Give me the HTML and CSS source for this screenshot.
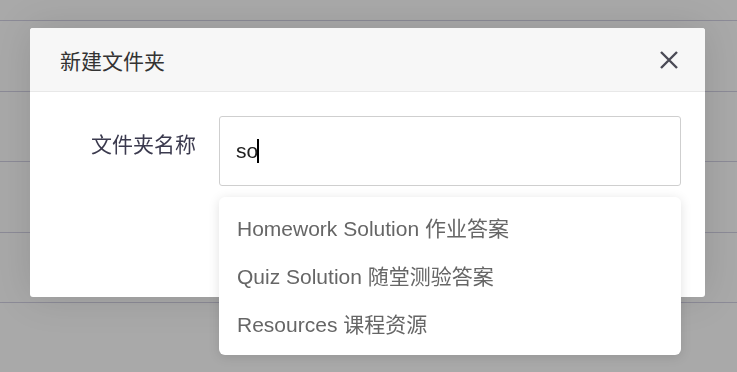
FILE: index.html
```html
<!DOCTYPE html>
<html lang="zh">
<head>
    <meta charset="UTF-8">
    <meta name="viewport" content="width=device-width, initial-scale=1.0">
    <title>新建文件夹</title>
    <link rel="stylesheet" href="styles.css">
</head>
<body>
    <!-- 背景里的表格行 -->
    <div class="page">
        <div class="row row-first"></div>
        <div class="row"></div>
        <div class="row"></div>
        <div class="row"></div>
        <div class="row"></div>
    </div>

    <div class="mask">
        <div class="modal">
            <div class="modal-header">
                <span class="modal-title">新建文件夹</span>
                <span class="btn-close">
                    <svg width="20" height="20" viewBox="0 0 20 20">
                        <path d="M2 2 L18 18 M18 2 L2 18" stroke="#4a4a55" stroke-width="2.4" fill="none"/>
                    </svg>
                </span>
            </div>
            <div class="modal-body">
                <label class="form-label">文件夹名称</label>
                <div class="form-field">
                    <div class="input">so<span class="caret"></span></div>
                    <ul class="suggest">
                        <li>Homework Solution 作业答案</li>
                        <li>Quiz Solution 随堂测验答案</li>
                        <li>Resources 课程资源</li>
                    </ul>
                </div>
            </div>
        </div>
    </div>
</body>
</html>
```

FILE: styles.css
```css
body {
    margin: 0;
    font-family: 'Liberation Sans', 'Noto Sans CJK SC', sans-serif;
    background-color: #a9a9a9;
    overflow: hidden;
}
.page {
    height: 372px;
}
.row {
    height: 69.5px;
    border-bottom: 1px solid #8c8b97;
}
.row-first {
    height: 20px;
}
.mask {
    position: fixed;
    top: 0;
    left: 0;
    right: 0;
    bottom: 0;
    padding-top: 28px;
}
.modal {
    margin-left: 30px;
    width: 675px;
    background-color: white;
    border-radius: 3px;
    box-shadow: 0 0 40px rgba(0,0,0,0.12);
}
.modal-header {
    height: 63px;
    display: flex;
    align-items: center;
    justify-content: space-between;
    padding: 0 26px 0 30px;
    background-color: #f7f7f7;
    border-bottom: 1px solid #e8e8e8;
    border-radius: 3px 3px 0 0;
}
.modal-title {
    font-size: 21px;
    color: #333;
}
.btn-close {
    display: flex;
    cursor: pointer;
}
.modal-body {
    display: flex;
    padding: 24px 24px 111px 24px;
}
.form-label {
    width: 142px;
    margin-right: 23px;
    padding-top: 14px;
    text-align: right;
    font-size: 21px;
    line-height: 30px;
    color: #3b3a4e;
}
.form-field {
    flex: 1;
    position: relative;
}
.input {
    height: 68px;
    border: 1px solid #cfcfcf;
    border-radius: 3px;
    padding-left: 16px;
    display: flex;
    align-items: center;
    font-size: 21px;
    color: #222;
}
.caret {
    display: inline-block;
    width: 2px;
    height: 24px;
    margin-left: -1px;
    background-color: #000;
}
.suggest {
    position: absolute;
    top: 81px;
    left: 0;
    right: 0;
    margin: 0;
    padding: 8px 0 6px;
    list-style: none;
    background-color: white;
    border-radius: 6px;
    box-shadow: 0 2px 12px rgba(0,0,0,0.12);
}
.suggest li {
    height: 48px;
    line-height: 48px;
    padding-left: 18px;
    font-size: 21px;
    color: #666;
}
```
